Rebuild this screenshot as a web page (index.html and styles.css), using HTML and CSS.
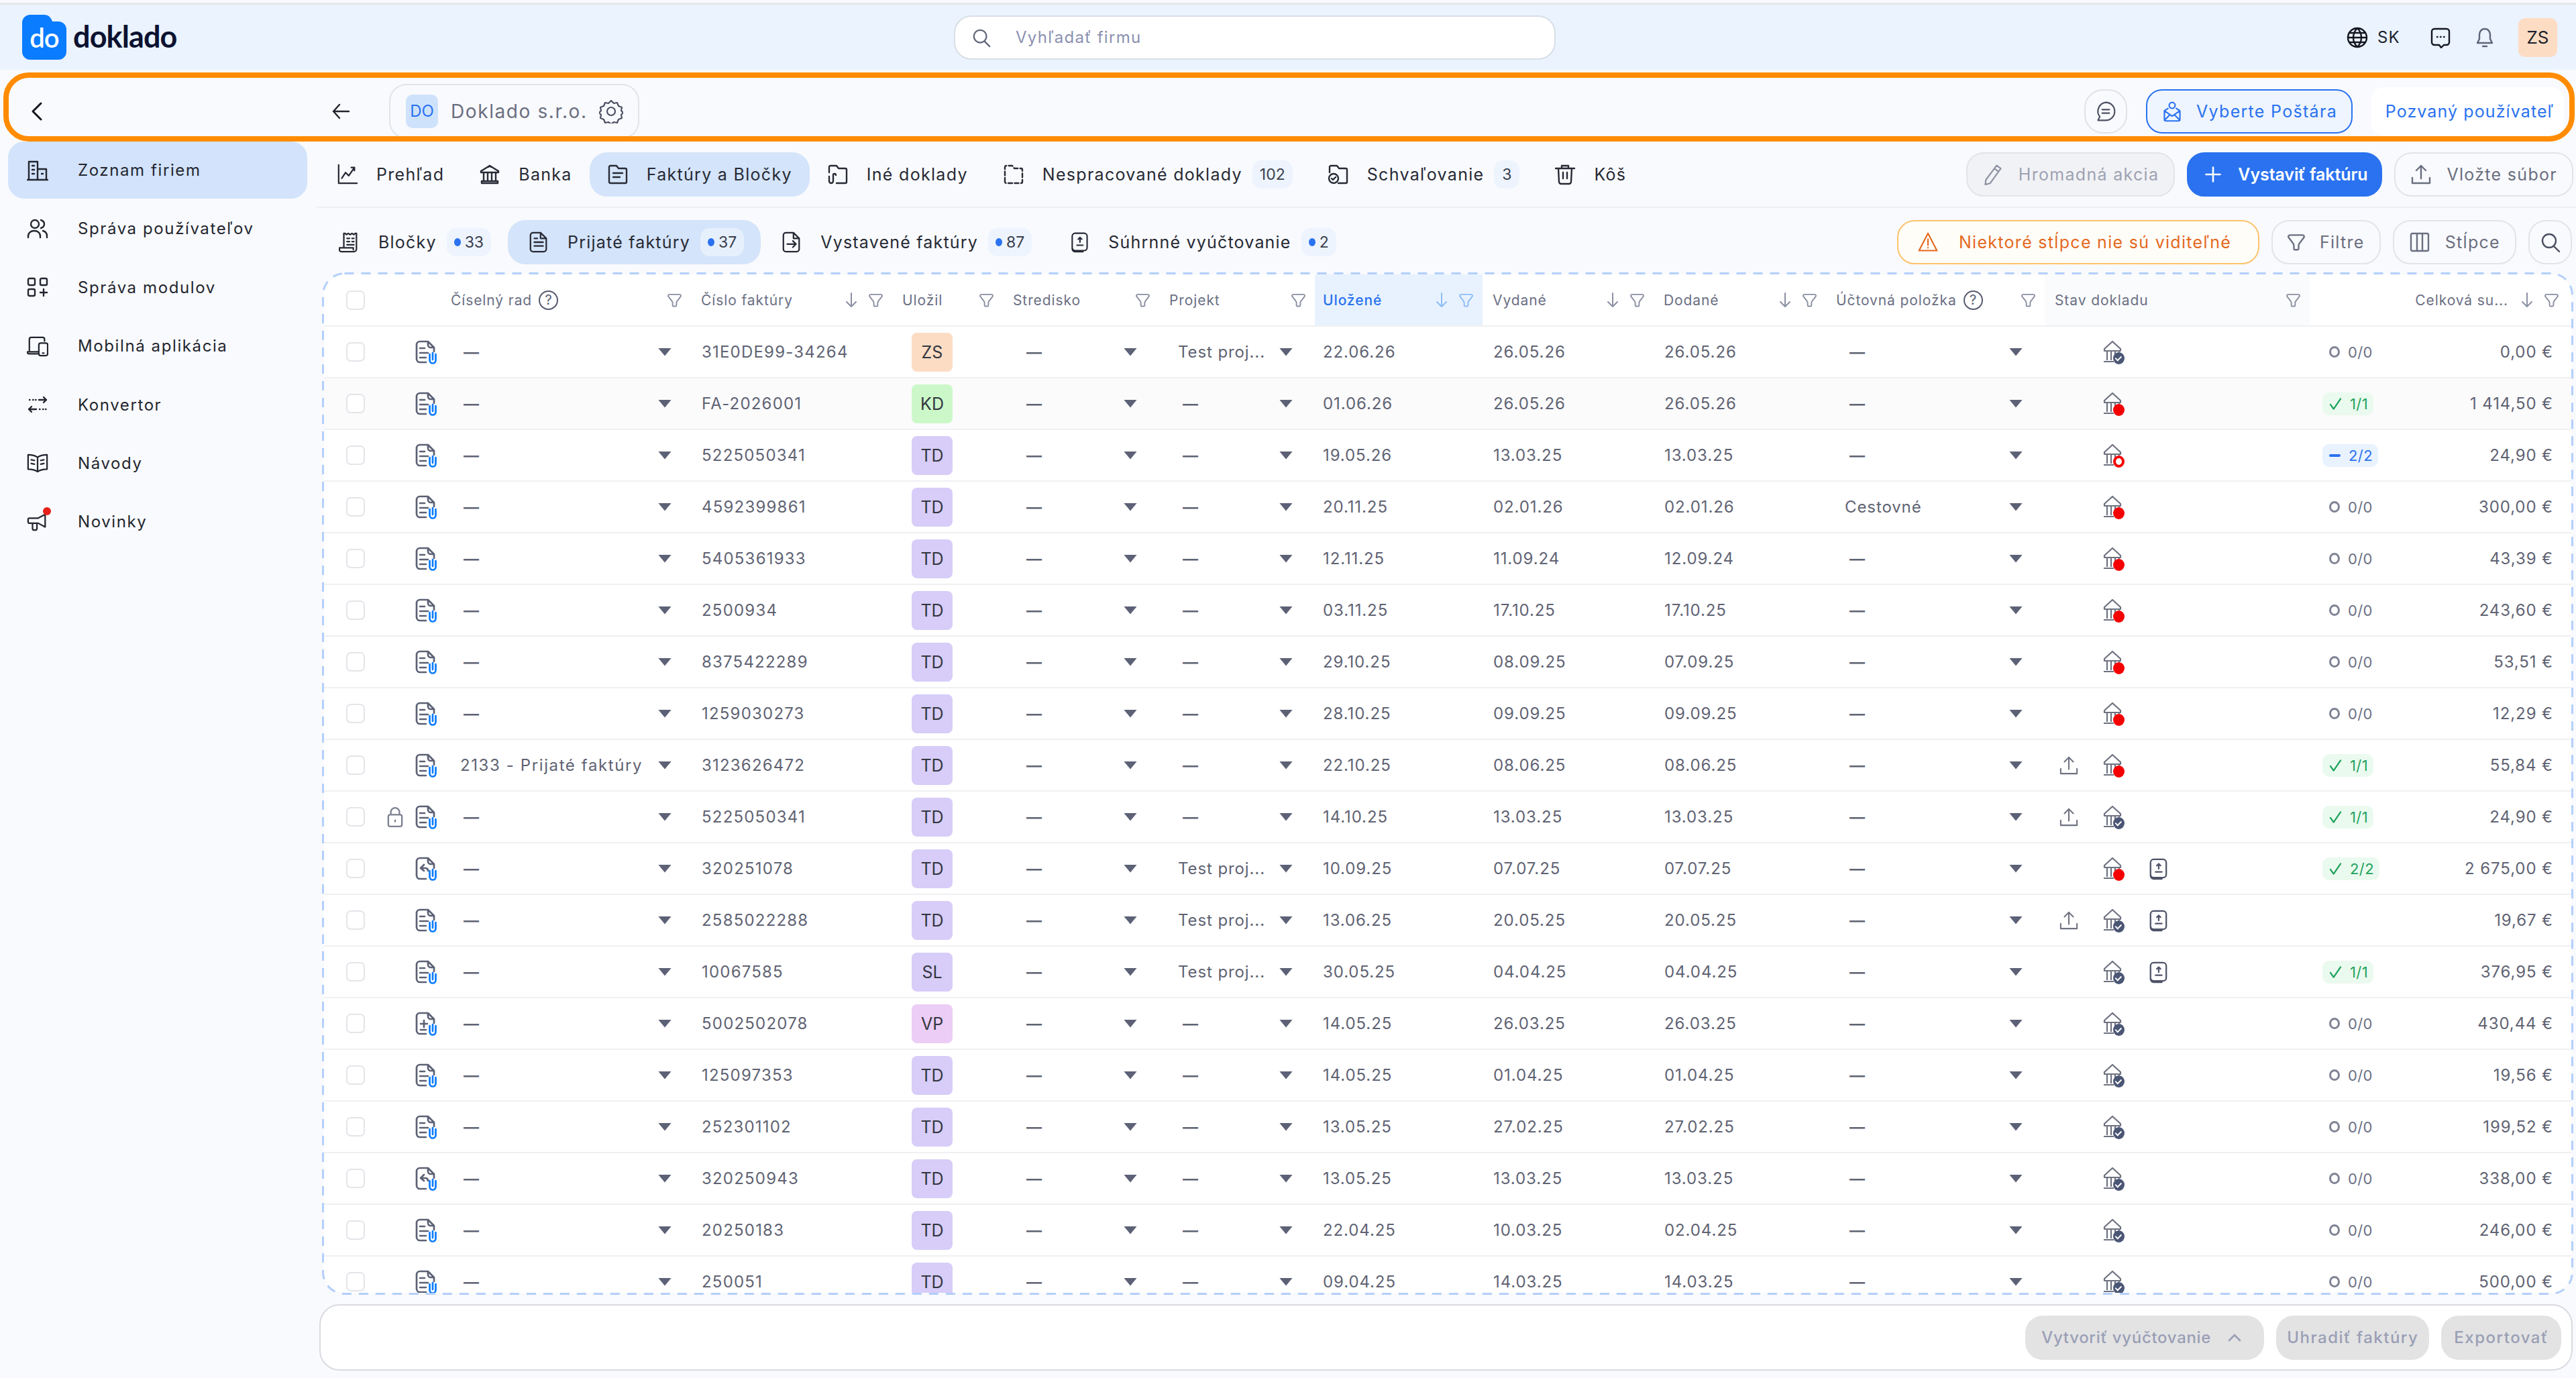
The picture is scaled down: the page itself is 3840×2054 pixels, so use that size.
FILE: index.html
```html
<!DOCTYPE html>
<html lang="sk">
<head>
<meta charset="utf-8">
<title>Doklado</title>
<link rel="stylesheet" href="styles.css">
</head>
<body>
<svg class="defs" aria-hidden="true">
<symbol id="filter" viewBox="0 0 22 22"><path d="M3 2h16a2 2 0 0 1 1.6 3.1L15 12.5c-.6.8-1 1.8-1 3V19a1.5 1.5 0 0 1-1.5 1.5h-3A1.5 1.5 0 0 1 8 19v-3.5c0-1.2-.4-2.2-1-3L1.4 5.1A2 2 0 0 1 3 2z"/></symbol>
<symbol id="adown" viewBox="0 0 20 24"><path d="M10 2v20M3 15l7 7 7-7"/></symbol>
<symbol id="doc" viewBox="0 0 33 36"><g stroke="#5c6175"><path d="M17 33H8a5 5 0 0 1-5-5V7a5 5 0 0 1 5-5h12l9 9v6M20 2v5a4 4 0 0 0 4 4h5M8 12h7M8 19h12M8 26h9"/></g><path stroke="#0a7cff" d="M22.5 21v9a4.5 4.5 0 0 0 9 0v-9M27 19v10"/></symbol>
<symbol id="docback" viewBox="0 0 33 36"><g stroke="#5c6175"><path d="M17 33H8a5 5 0 0 1-5-5V7a5 5 0 0 1 5-5h12l9 9v6M20 2v5a4 4 0 0 0 4 4h5M14 12l-5 5 5 4M9 17h8a4 4 0 0 1 3 4"/></g><path stroke="#0a7cff" d="M22.5 21v9a4.5 4.5 0 0 0 9 0v-9M27 19v10"/></symbol>
<symbol id="docplus" viewBox="0 0 33 36"><g stroke="#5c6175"><path d="M17 33H8a5 5 0 0 1-5-5V7a5 5 0 0 1 5-5h12l9 9v6M20 2v5a4 4 0 0 0 4 4h5M9 18h10M14 13v10M9 27h8"/></g><path stroke="#0a7cff" d="M22.5 21v9a4.5 4.5 0 0 0 9 0v-9M27 19v10"/></symbol>
<symbol id="bank" viewBox="0 0 33 35"><path d="M3 13 15 2l12 11v3H3zM7 16v14M13 16v14M19 16v6M25 16v2M2 32h15"/></symbol>
<symbol id="bankdark" viewBox="0 0 32 32"><path d="M3 11 16 3l13 8v2H3zM7 13v13M13 13v13M19 13v13M25 13v13M4 26h24v3H4z"/><path d="M14 5l2-2 2 2"/></symbol>
<symbol id="upl" viewBox="0 0 30 32"><path d="M15 22V3M8 10l7-7 7 7M2 21v8h26v-8"/></symbol>
<symbol id="stack" viewBox="0 0 32 36"><path d="M9 3h15a5 5 0 0 1 5 5v19a5 5 0 0 1-5 5H9a5 5 0 0 1-5-5V8a5 5 0 0 1 5-5zM4 26v3a5 5 0 0 0 5 5h13M12 23h10M17 18V10M14 13l3-3 3 3"/></symbol>
<symbol id="lock" viewBox="0 0 26 34"><path d="M6 13V9a7 7 0 0 1 14 0v4M5 13h16a3 3 0 0 1 3 3v13a3 3 0 0 1-3 3H5a3 3 0 0 1-3-3V16a3 3 0 0 1 3-3zM13 21v4"/></symbol>
<symbol id="search" viewBox="0 0 32 32"><path d="M14 4a10 10 0 1 1 0 20 10 10 0 0 1 0-20zM21 22l8 8"/></symbol>
<symbol id="globe" viewBox="0 0 32 32"><path d="M16 2a14 14 0 1 1 0 28 14 14 0 0 1 0-28zM2 16h28M4 9h24M4 23h24M16 2c-8 8-8 20 0 28M16 2c8 8 8 20 0 28"/></symbol>
<symbol id="msg" viewBox="0 0 32 32"><path d="M7 3h18a4 4 0 0 1 4 4v16a4 4 0 0 1-4 4h-4l-4 4-3-4H7a4 4 0 0 1-4-4V7a4 4 0 0 1 4-4zM11 15h.5M16 15h.5M21 15h.5"/></symbol>
<symbol id="bell" viewBox="0 0 32 32"><path d="M16 3c-5 0-8 4-8 9v6l-3 6h22l-3-6v-6c0-5-3-9-8-9zM13 29h6"/></symbol>
<symbol id="gear" viewBox="0 0 36 36"><path d="M18 2l4 4 5-1 2 5 5 2-1 5 3 3-3 3 1 5-5 2-2 5-5-1-4 3-4-3-5 1-2-5-5-2 1-5-3-3 3-3-1-5 5-2 2-5 5 1zM18 12a6 6 0 1 1 0 12 6 6 0 0 1 0-12z"/></symbol>
<symbol id="bubbles" viewBox="0 0 36 36"><path d="M18 3a15 15 0 0 1 0 30H5l3-6a15 15 0 0 1 10-24zM12 15h12M12 21h12"/></symbol>
<symbol id="mailman" viewBox="0 0 32 36"><path d="M3 17v14a3 3 0 0 0 3 3h20a3 3 0 0 0 3-3V17l-6-4M9 13l-6 4 13 9 13-9M3 33l9-9M29 33l-9-9M16 3a5 5 0 1 1 0 10 5 5 0 0 1 0-10z"/></symbol>
<symbol id="building" viewBox="0 0 32 32"><path d="M3 30V3h13v27M16 14h13v16M1 30h30M8 9h3M8 15h3M8 21h3M22 21h2"/></symbol>
<symbol id="users" viewBox="0 0 32 32"><path d="M12 3a6 6 0 1 1 0 12 6 6 0 0 1 0-12zM2 29v-2c0-5 4-8 9-8s9 3 9 8v2M21 3c3 1 5 3 5 6s-2 5-5 6M24 19c4 1 6 4 6 8v2"/></symbol>
<symbol id="mods" viewBox="0 0 32 32"><path d="M4 3h6a2 2 0 0 1 2 2v6a2 2 0 0 1-2 2H4a2 2 0 0 1-2-2V5a2 2 0 0 1 2-2zM22 3h6a2 2 0 0 1 2 2v6a2 2 0 0 1-2 2h-6a2 2 0 0 1-2-2V5a2 2 0 0 1 2-2zM4 19h6a2 2 0 0 1 2 2v6a2 2 0 0 1-2 2H4a2 2 0 0 1-2-2v-6a2 2 0 0 1 2-2zM25 19v10M20 24h10"/></symbol>
<symbol id="mobile" viewBox="0 0 34 32"><path d="M4 23V5a3 3 0 0 1 3-3h18a3 3 0 0 1 3 3v3M1 25h18v3H3a2 2 0 0 1-2-2zM22 11h8a3 3 0 0 1 3 3v14a3 3 0 0 1-3 3h-8a3 3 0 0 1-3-3V14a3 3 0 0 1 3-3zM25 27h2"/></symbol>
<symbol id="conv" viewBox="0 0 32 32"><path d="M18 9h11M25 5l4 4-4 4M3 23h11M7 19l-4 4 4 4M4 9h.5M9 9h.5M13 9h.5M19 23h.5M24 23h.5M28 23h.5"/></symbol>
<symbol id="book" viewBox="0 0 34 32"><path d="M17 7C13 4 7 3 2 3v23c5 0 11 1 15 4 4-3 10-4 15-4V3c-5 0-11 1-15 4zM17 7v23M7 11l5 1M7 17l5 1M27 11l-5 1M27 17l-5 1"/></symbol>
<symbol id="mega" viewBox="0 0 34 32"><path d="M4 10h14l11-6v20l-11-6H4a2 2 0 0 1-2-2v-4a2 2 0 0 1 2-2zM9 18v8a3 3 0 0 0 3 3h1a3 3 0 0 0 3-3v-8"/></symbol>
<symbol id="chart" viewBox="0 0 32 34"><path d="M2 2v29h29M7 23l6-9 5 5 9-13M22 6h5v5"/></symbol>
<symbol id="fdoc" viewBox="0 0 32 32"><path d="M3 5a2 2 0 0 1 2-2h9l3 4h10a2 2 0 0 1 2 2v18a2 2 0 0 1-2 2H5a2 2 0 0 1-2-2zM9 14h14M9 20h10"/></symbol>
<symbol id="fclip" viewBox="0 0 32 32"><path d="M3 13V5a2 2 0 0 1 2-2h9l3 4h10a2 2 0 0 1 2 2v18a2 2 0 0 1-2 2H14M3 19v7a3 3 0 0 0 6 0v-9a2 2 0 0 1 4 0"/></symbol>
<symbol id="fdash" viewBox="0 0 32 32"><path stroke-dasharray="6 3.500" d="M3 27V5a2 2 0 0 1 2-2h9l3 4h10a2 2 0 0 1 2 2v18a2 2 0 0 1-2 2H5a2 2 0 0 1-2-2z"/></symbol>
<symbol id="fcheck" viewBox="0 0 32 32"><path d="M3 13V5a2 2 0 0 1 2-2h9l3 4h10a2 2 0 0 1 2 2v18a2 2 0 0 1-2 2H16M9 15a7 7 0 1 1 0 14 7 7 0 0 1 0-14zM6 22l2 2 4-4"/></symbol>
<symbol id="trash" viewBox="0 0 32 32"><path d="M2 7h28M11 7V3h10v4M6 7l1 20a3 3 0 0 0 3 3h12a3 3 0 0 0 3-3l1-20M13 13v9M19 13v9"/></symbol>
<symbol id="receipt" viewBox="0 0 32 34"><path d="M7 26V3h2l2 2 3-2 3 2 3-2 3 2 2-2h2v25a4 4 0 0 1-4 4H3a3 3 0 0 1-3-3v-3h22v3M12 11h4M20 11h3M12 16h4M20 16h3M12 21h11"/></symbol>
<symbol id="dlines" viewBox="0 0 32 34"><path d="M7 2h12l9 9v17a4 4 0 0 1-4 4H7a4 4 0 0 1-4-4V6a4 4 0 0 1 4-4zM19 2v9h9M9 17h14M9 23h14M9 11h5"/></symbol>
<symbol id="darrow" viewBox="0 0 32 34"><path d="M7 2h12l9 9v17a4 4 0 0 1-4 4H7a4 4 0 0 1-4-4V6a4 4 0 0 1 4-4zM19 2v9h9M9 20h14M18 15l5 5-5 5"/></symbol>
<symbol id="pencil" viewBox="0 0 32 36"><path d="M22 3l7 5L11 33l-8 2 1-8zM18 8l7 5"/></symbol>
<symbol id="plus" viewBox="0 0 32 32"><path d="M16 3v26M3 16h26"/></symbol>
<symbol id="warn" viewBox="0 0 36 36"><path d="M18 3 33 32H3zM18 13v10M18 27v.500"/></symbol>
<symbol id="cols" viewBox="0 0 32 32"><path d="M5 3h22a2 2 0 0 1 2 2v22a2 2 0 0 1-2 2H5a2 2 0 0 1-2-2V5a2 2 0 0 1 2-2zM12 3v26M20 3v26"/></symbol>
<symbol id="check" viewBox="0 0 20 20"><path d="M2 11l5 7L18 2"/></symbol>
<symbol id="up" viewBox="0 0 20 12"><path d="M2 10l8-8 8 8"/></symbol>
<symbol id="back" viewBox="0 0 28 28"><path d="M26 14H3M12 4 3 14l9 10"/></symbol>
<symbol id="chev" viewBox="0 0 18 30"><path d="M15 3 3 15l12 12"/></symbol>
</svg>

<header class="topbar">
  <div class="logo"><div class="logo-mark"><svg viewBox="0 0 66 67"><path d="M12 0h21c6 0 10 4 12 10h9a12 12 0 0 1 12 12v33a12 12 0 0 1-12 12H12A12 12 0 0 1 0 55V12A12 12 0 0 1 12 0z"/></svg><span>do</span></div><span class="logo-word">doklado</span></div>
  <div class="searchbox"><svg class="ic ic-s"><use href="#search"/></svg><span>Vyhľadať firmu</span></div>
  <div class="top-right">
    <svg class="ic dark"><use href="#globe"/></svg><span class="lang">SK</span>
    <svg class="ic dark msg"><use href="#msg"/></svg>
    <svg class="ic bell"><use href="#bell"/></svg>
    <span class="user">ZS</span>
  </div>
</header>

<div class="crumb">
  <div class="crumb-left"><svg class="ic chev"><use href="#chev"/></svg></div>
  <svg class="ic back"><use href="#back"/></svg>
  <div class="company"><span class="co-av">DO</span><span class="co-name">Doklado s.r.o.</span><svg class="ic gear"><use href="#gear"/></svg></div>
  <div class="crumb-right">
    <span class="round-btn"><svg class="ic"><use href="#bubbles"/></svg></span>
    <span class="mail-btn"><svg class="ic"><use href="#mailman"/></svg>Vyberte Poštára</span>
    <span class="invited">Pozvaný používateľ</span>
  </div>
  <div class="frame"></div>
</div>

<div class="layout">
  <nav class="side">
    <a class="nav on"><svg class="ic"><use href="#building"/></svg>Zoznam firiem</a>
    <a class="nav"><svg class="ic"><use href="#users"/></svg>Správa používateľov</a>
    <a class="nav"><svg class="ic"><use href="#mods"/></svg>Správa modulov</a>
    <a class="nav"><svg class="ic"><use href="#mobile"/></svg>Mobilná aplikácia</a>
    <a class="nav"><svg class="ic"><use href="#conv"/></svg>Konvertor</a>
    <a class="nav"><svg class="ic"><use href="#book"/></svg>Návody</a>
    <a class="nav"><span class="mega"><svg class="ic"><use href="#mega"/></svg><i class="red-dot"></i></span>Novinky</a>
  </nav>

  <main class="main">
    <div class="tabs">
      <a class="tab"><svg class="ic"><use href="#chart"/></svg>Prehľad</a>
      <a class="tab"><svg class="ic"><use href="#bankdark"/></svg>Banka</a>
      <a class="tab on"><svg class="ic"><use href="#fdoc"/></svg>Faktúry a Bločky</a>
      <a class="tab"><svg class="ic"><use href="#fclip"/></svg>Iné doklady</a>
      <a class="tab"><svg class="ic"><use href="#fdash"/></svg>Nespracované doklady<span class="count">102</span></a>
      <a class="tab"><svg class="ic"><use href="#fcheck"/></svg>Schvaľovanie<span class="count">3</span></a>
      <a class="tab"><svg class="ic"><use href="#trash"/></svg>Kôš</a>
      <div class="actions">
        <span class="btn off"><svg class="ic"><use href="#pencil"/></svg>Hromadná akcia</span>
        <span class="btn primary"><svg class="ic"><use href="#plus"/></svg>Vystaviť faktúru</span>
        <span class="btn"><svg class="ic"><use href="#upl"/></svg>Vložte súbor</span>
      </div>
    </div>

    <div class="tabs sub">
      <a class="tab"><svg class="ic"><use href="#receipt"/></svg>Bločky<span class="count dot">33</span></a>
      <a class="tab on"><svg class="ic"><use href="#dlines"/></svg>Prijaté faktúry<span class="count dot">37</span></a>
      <a class="tab"><svg class="ic"><use href="#darrow"/></svg>Vystavené faktúry<span class="count dot">87</span></a>
      <a class="tab"><svg class="ic"><use href="#stack"/></svg>Súhrnné vyúčtovanie<span class="count dot">2</span></a>
      <div class="actions">
        <span class="btn warnbtn"><svg class="ic"><use href="#warn"/></svg>Niektoré stĺpce nie sú viditeľné</span>
        <span class="btn"><svg class="ic fun"><use href="#filter"/></svg>Filtre</span>
        <span class="btn"><svg class="ic"><use href="#cols"/></svg>Stĺpce</span>
        <span class="btn sq"><svg class="ic"><use href="#search"/></svg></span>
      </div>
    </div>

    <section class="table-wrap">
    <svg class="dashes" aria-hidden="true"><rect/></svg>
    <div class="table">
      <div class="row head">
        <div class="h"><i class="box"></i></div>
        <div class="h"></div>
        <div class="h"></div>
        <div class="h flush">Číselný rad<span class="help">?</span><svg class="fil"><use href="#filter"/></svg></div>
        <div class="h">Číslo faktúry<svg class="arr"><use href="#adown"/></svg><svg class="fil"><use href="#filter"/></svg></div>
        <div class="h">Uložil<svg class="fil"><use href="#filter"/></svg></div>
        <div class="h">Stredisko<svg class="fil"><use href="#filter"/></svg></div>
        <div class="h">Projekt<svg class="fil"><use href="#filter"/></svg></div>
        <div class="h sorted">Uložené<svg class="arr"><use href="#adown"/></svg><svg class="fil"><use href="#filter"/></svg></div>
        <div class="h">Vydané<svg class="arr"><use href="#adown"/></svg><svg class="fil"><use href="#filter"/></svg></div>
        <div class="h">Dodané<svg class="arr"><use href="#adown"/></svg><svg class="fil"><use href="#filter"/></svg></div>
        <div class="h">Účtovná položka<span class="help">?</span><svg class="fil"><use href="#filter"/></svg></div>
        <div class="h tint">Stav dokladu<svg class="fil"><use href="#filter"/></svg></div>
        <div class="h end">Celková su...<svg class="arr"><use href="#adown"/></svg><svg class="fil"><use href="#filter"/></svg></div>
      </div>

      <div class="row"><div class="c"><i class="box"></i></div><div class="c"></div><div class="c"><svg class="dic"><use href="#doc"/></svg></div><div class="c sel s1"><span class="dash">—</span><i class="caret"></i></div><div class="c num">31E0DE99-34264</div><div class="c"><span class="av zs">ZS</span></div><div class="c sel"><span class="dash">—</span><i class="caret"></i></div><div class="c sel"><span class="val">Test proj...</span><i class="caret"></i></div><div class="c date">22.06.26</div><div class="c date">26.05.26</div><div class="c date">26.05.26</div><div class="c sel"><span class="dash">—</span><i class="caret"></i></div><div class="c icons"><span class="slot"></span><span class="slot"><svg class="bk"><use href="#bank"/></svg><i class="pin ok"></i></span></div><div class="c sum"><span class="st"><i class="ring"></i>0/0</span><span class="amt">0,00 €</span></div></div>

      <div class="row alt"><div class="c"><i class="box"></i></div><div class="c"></div><div class="c"><svg class="dic"><use href="#doc"/></svg></div><div class="c sel s1"><span class="dash">—</span><i class="caret"></i></div><div class="c num">FA-2026001</div><div class="c"><span class="av kd">KD</span></div><div class="c sel"><span class="dash">—</span><i class="caret"></i></div><div class="c sel"><span class="dash">—</span><i class="caret"></i></div><div class="c date">01.06.26</div><div class="c date">26.05.26</div><div class="c date">26.05.26</div><div class="c sel"><span class="dash">—</span><i class="caret"></i></div><div class="c icons"><span class="slot"></span><span class="slot"><svg class="bk"><use href="#bank"/></svg><i class="pin red"></i></span></div><div class="c sum"><span class="st green"><svg class="tick"><use href="#check"/></svg>1/1</span><span class="amt">1 414,50 €</span></div></div>

      <div class="row"><div class="c"><i class="box"></i></div><div class="c"></div><div class="c"><svg class="dic"><use href="#doc"/></svg></div><div class="c sel s1"><span class="dash">—</span><i class="caret"></i></div><div class="c num">5225050341</div><div class="c"><span class="av td">TD</span></div><div class="c sel"><span class="dash">—</span><i class="caret"></i></div><div class="c sel"><span class="dash">—</span><i class="caret"></i></div><div class="c date">19.05.26</div><div class="c date">13.03.25</div><div class="c date">13.03.25</div><div class="c sel"><span class="dash">—</span><i class="caret"></i></div><div class="c icons"><span class="slot"></span><span class="slot"><svg class="bk"><use href="#bank"/></svg><i class="pin hollow"></i></span></div><div class="c sum"><span class="st blue"><i class="mini"></i>2/2</span><span class="amt">24,90 €</span></div></div>

      <div class="row"><div class="c"><i class="box"></i></div><div class="c"></div><div class="c"><svg class="dic"><use href="#doc"/></svg></div><div class="c sel s1"><span class="dash">—</span><i class="caret"></i></div><div class="c num">4592399861</div><div class="c"><span class="av td">TD</span></div><div class="c sel"><span class="dash">—</span><i class="caret"></i></div><div class="c sel"><span class="dash">—</span><i class="caret"></i></div><div class="c date">20.11.25</div><div class="c date">02.01.26</div><div class="c date">02.01.26</div><div class="c sel"><span class="val">Cestovné</span><i class="caret"></i></div><div class="c icons"><span class="slot"></span><span class="slot"><svg class="bk"><use href="#bank"/></svg><i class="pin red"></i></span></div><div class="c sum"><span class="st"><i class="ring"></i>0/0</span><span class="amt">300,00 €</span></div></div>

      <div class="row"><div class="c"><i class="box"></i></div><div class="c"></div><div class="c"><svg class="dic"><use href="#doc"/></svg></div><div class="c sel s1"><span class="dash">—</span><i class="caret"></i></div><div class="c num">5405361933</div><div class="c"><span class="av td">TD</span></div><div class="c sel"><span class="dash">—</span><i class="caret"></i></div><div class="c sel"><span class="dash">—</span><i class="caret"></i></div><div class="c date">12.11.25</div><div class="c date">11.09.24</div><div class="c date">12.09.24</div><div class="c sel"><span class="dash">—</span><i class="caret"></i></div><div class="c icons"><span class="slot"></span><span class="slot"><svg class="bk"><use href="#bank"/></svg><i class="pin red"></i></span></div><div class="c sum"><span class="st"><i class="ring"></i>0/0</span><span class="amt">43,39 €</span></div></div>

      <div class="row"><div class="c"><i class="box"></i></div><div class="c"></div><div class="c"><svg class="dic"><use href="#doc"/></svg></div><div class="c sel s1"><span class="dash">—</span><i class="caret"></i></div><div class="c num">2500934</div><div class="c"><span class="av td">TD</span></div><div class="c sel"><span class="dash">—</span><i class="caret"></i></div><div class="c sel"><span class="dash">—</span><i class="caret"></i></div><div class="c date">03.11.25</div><div class="c date">17.10.25</div><div class="c date">17.10.25</div><div class="c sel"><span class="dash">—</span><i class="caret"></i></div><div class="c icons"><span class="slot"></span><span class="slot"><svg class="bk"><use href="#bank"/></svg><i class="pin red"></i></span></div><div class="c sum"><span class="st"><i class="ring"></i>0/0</span><span class="amt">243,60 €</span></div></div>

      <div class="row"><div class="c"><i class="box"></i></div><div class="c"></div><div class="c"><svg class="dic"><use href="#doc"/></svg></div><div class="c sel s1"><span class="dash">—</span><i class="caret"></i></div><div class="c num">8375422289</div><div class="c"><span class="av td">TD</span></div><div class="c sel"><span class="dash">—</span><i class="caret"></i></div><div class="c sel"><span class="dash">—</span><i class="caret"></i></div><div class="c date">29.10.25</div><div class="c date">08.09.25</div><div class="c date">07.09.25</div><div class="c sel"><span class="dash">—</span><i class="caret"></i></div><div class="c icons"><span class="slot"></span><span class="slot"><svg class="bk"><use href="#bank"/></svg><i class="pin red"></i></span></div><div class="c sum"><span class="st"><i class="ring"></i>0/0</span><span class="amt">53,51 €</span></div></div>

      <div class="row"><div class="c"><i class="box"></i></div><div class="c"></div><div class="c"><svg class="dic"><use href="#doc"/></svg></div><div class="c sel s1"><span class="dash">—</span><i class="caret"></i></div><div class="c num">1259030273</div><div class="c"><span class="av td">TD</span></div><div class="c sel"><span class="dash">—</span><i class="caret"></i></div><div class="c sel"><span class="dash">—</span><i class="caret"></i></div><div class="c date">28.10.25</div><div class="c date">09.09.25</div><div class="c date">09.09.25</div><div class="c sel"><span class="dash">—</span><i class="caret"></i></div><div class="c icons"><span class="slot"></span><span class="slot"><svg class="bk"><use href="#bank"/></svg><i class="pin red"></i></span></div><div class="c sum"><span class="st"><i class="ring"></i>0/0</span><span class="amt">12,29 €</span></div></div>

      <div class="row"><div class="c"><i class="box"></i></div><div class="c"></div><div class="c"><svg class="dic"><use href="#doc"/></svg></div><div class="c sel s1 long"><span class="val">2133 - Prijaté faktúry</span><i class="caret"></i></div><div class="c num">3123626472</div><div class="c"><span class="av td">TD</span></div><div class="c sel"><span class="dash">—</span><i class="caret"></i></div><div class="c sel"><span class="dash">—</span><i class="caret"></i></div><div class="c date">22.10.25</div><div class="c date">08.06.25</div><div class="c date">08.06.25</div><div class="c sel"><span class="dash">—</span><i class="caret"></i></div><div class="c icons"><span class="slot"><svg class="upl"><use href="#upl"/></svg></span><span class="slot"><svg class="bk"><use href="#bank"/></svg><i class="pin red"></i></span></div><div class="c sum"><span class="st green"><svg class="tick"><use href="#check"/></svg>1/1</span><span class="amt">55,84 €</span></div></div>

      <div class="row"><div class="c"><i class="box"></i></div><div class="c"><svg class="lk"><use href="#lock"/></svg></div><div class="c"><svg class="dic"><use href="#doc"/></svg></div><div class="c sel s1"><span class="dash">—</span><i class="caret"></i></div><div class="c num">5225050341</div><div class="c"><span class="av td">TD</span></div><div class="c sel"><span class="dash">—</span><i class="caret"></i></div><div class="c sel"><span class="dash">—</span><i class="caret"></i></div><div class="c date">14.10.25</div><div class="c date">13.03.25</div><div class="c date">13.03.25</div><div class="c sel"><span class="dash">—</span><i class="caret"></i></div><div class="c icons"><span class="slot"><svg class="upl"><use href="#upl"/></svg></span><span class="slot"><svg class="bk"><use href="#bank"/></svg><i class="pin ok"></i></span></div><div class="c sum"><span class="st green"><svg class="tick"><use href="#check"/></svg>1/1</span><span class="amt">24,90 €</span></div></div>

      <div class="row"><div class="c"><i class="box"></i></div><div class="c"></div><div class="c"><svg class="dic"><use href="#docback"/></svg></div><div class="c sel s1"><span class="dash">—</span><i class="caret"></i></div><div class="c num">320251078</div><div class="c"><span class="av td">TD</span></div><div class="c sel"><span class="dash">—</span><i class="caret"></i></div><div class="c sel"><span class="val">Test proj...</span><i class="caret"></i></div><div class="c date">10.09.25</div><div class="c date">07.07.25</div><div class="c date">07.07.25</div><div class="c sel"><span class="dash">—</span><i class="caret"></i></div><div class="c icons"><span class="slot"></span><span class="slot"><svg class="bk"><use href="#bank"/></svg><i class="pin red"></i></span><span class="slot"><svg class="stk"><use href="#stack"/></svg></span></div><div class="c sum"><span class="st green"><svg class="tick"><use href="#check"/></svg>2/2</span><span class="amt">2 675,00 €</span></div></div>

      <div class="row"><div class="c"><i class="box"></i></div><div class="c"></div><div class="c"><svg class="dic"><use href="#doc"/></svg></div><div class="c sel s1"><span class="dash">—</span><i class="caret"></i></div><div class="c num">2585022288</div><div class="c"><span class="av td">TD</span></div><div class="c sel"><span class="dash">—</span><i class="caret"></i></div><div class="c sel"><span class="val">Test proj...</span><i class="caret"></i></div><div class="c date">13.06.25</div><div class="c date">20.05.25</div><div class="c date">20.05.25</div><div class="c sel"><span class="dash">—</span><i class="caret"></i></div><div class="c icons"><span class="slot"><svg class="upl"><use href="#upl"/></svg></span><span class="slot"><svg class="bk"><use href="#bank"/></svg><i class="pin ok"></i></span><span class="slot"><svg class="stk"><use href="#stack"/></svg></span></div><div class="c sum"><span></span><span class="amt">19,67 €</span></div></div>

      <div class="row"><div class="c"><i class="box"></i></div><div class="c"></div><div class="c"><svg class="dic"><use href="#doc"/></svg></div><div class="c sel s1"><span class="dash">—</span><i class="caret"></i></div><div class="c num">10067585</div><div class="c"><span class="av sl">SL</span></div><div class="c sel"><span class="dash">—</span><i class="caret"></i></div><div class="c sel"><span class="val">Test proj...</span><i class="caret"></i></div><div class="c date">30.05.25</div><div class="c date">04.04.25</div><div class="c date">04.04.25</div><div class="c sel"><span class="dash">—</span><i class="caret"></i></div><div class="c icons"><span class="slot"></span><span class="slot"><svg class="bk"><use href="#bank"/></svg><i class="pin ok"></i></span><span class="slot"><svg class="stk"><use href="#stack"/></svg></span></div><div class="c sum"><span class="st green"><svg class="tick"><use href="#check"/></svg>1/1</span><span class="amt">376,95 €</span></div></div>

      <div class="row"><div class="c"><i class="box"></i></div><div class="c"></div><div class="c"><svg class="dic"><use href="#docplus"/></svg></div><div class="c sel s1"><span class="dash">—</span><i class="caret"></i></div><div class="c num">5002502078</div><div class="c"><span class="av vp">VP</span></div><div class="c sel"><span class="dash">—</span><i class="caret"></i></div><div class="c sel"><span class="dash">—</span><i class="caret"></i></div><div class="c date">14.05.25</div><div class="c date">26.03.25</div><div class="c date">26.03.25</div><div class="c sel"><span class="dash">—</span><i class="caret"></i></div><div class="c icons"><span class="slot"></span><span class="slot"><svg class="bk"><use href="#bank"/></svg><i class="pin ok"></i></span></div><div class="c sum"><span class="st"><i class="ring"></i>0/0</span><span class="amt">430,44 €</span></div></div>

      <div class="row"><div class="c"><i class="box"></i></div><div class="c"></div><div class="c"><svg class="dic"><use href="#doc"/></svg></div><div class="c sel s1"><span class="dash">—</span><i class="caret"></i></div><div class="c num">125097353</div><div class="c"><span class="av td">TD</span></div><div class="c sel"><span class="dash">—</span><i class="caret"></i></div><div class="c sel"><span class="dash">—</span><i class="caret"></i></div><div class="c date">14.05.25</div><div class="c date">01.04.25</div><div class="c date">01.04.25</div><div class="c sel"><span class="dash">—</span><i class="caret"></i></div><div class="c icons"><span class="slot"></span><span class="slot"><svg class="bk"><use href="#bank"/></svg><i class="pin ok"></i></span></div><div class="c sum"><span class="st"><i class="ring"></i>0/0</span><span class="amt">19,56 €</span></div></div>

      <div class="row"><div class="c"><i class="box"></i></div><div class="c"></div><div class="c"><svg class="dic"><use href="#doc"/></svg></div><div class="c sel s1"><span class="dash">—</span><i class="caret"></i></div><div class="c num">252301102</div><div class="c"><span class="av td">TD</span></div><div class="c sel"><span class="dash">—</span><i class="caret"></i></div><div class="c sel"><span class="dash">—</span><i class="caret"></i></div><div class="c date">13.05.25</div><div class="c date">27.02.25</div><div class="c date">27.02.25</div><div class="c sel"><span class="dash">—</span><i class="caret"></i></div><div class="c icons"><span class="slot"></span><span class="slot"><svg class="bk"><use href="#bank"/></svg><i class="pin ok"></i></span></div><div class="c sum"><span class="st"><i class="ring"></i>0/0</span><span class="amt">199,52 €</span></div></div>

      <div class="row"><div class="c"><i class="box"></i></div><div class="c"></div><div class="c"><svg class="dic"><use href="#docback"/></svg></div><div class="c sel s1"><span class="dash">—</span><i class="caret"></i></div><div class="c num">320250943</div><div class="c"><span class="av td">TD</span></div><div class="c sel"><span class="dash">—</span><i class="caret"></i></div><div class="c sel"><span class="dash">—</span><i class="caret"></i></div><div class="c date">13.05.25</div><div class="c date">13.03.25</div><div class="c date">13.03.25</div><div class="c sel"><span class="dash">—</span><i class="caret"></i></div><div class="c icons"><span class="slot"></span><span class="slot"><svg class="bk"><use href="#bank"/></svg><i class="pin ok"></i></span></div><div class="c sum"><span class="st"><i class="ring"></i>0/0</span><span class="amt">338,00 €</span></div></div>

      <div class="row"><div class="c"><i class="box"></i></div><div class="c"></div><div class="c"><svg class="dic"><use href="#doc"/></svg></div><div class="c sel s1"><span class="dash">—</span><i class="caret"></i></div><div class="c num">20250183</div><div class="c"><span class="av td">TD</span></div><div class="c sel"><span class="dash">—</span><i class="caret"></i></div><div class="c sel"><span class="dash">—</span><i class="caret"></i></div><div class="c date">22.04.25</div><div class="c date">10.03.25</div><div class="c date">02.04.25</div><div class="c sel"><span class="dash">—</span><i class="caret"></i></div><div class="c icons"><span class="slot"></span><span class="slot"><svg class="bk"><use href="#bank"/></svg><i class="pin ok"></i></span></div><div class="c sum"><span class="st"><i class="ring"></i>0/0</span><span class="amt">246,00 €</span></div></div>

      <div class="row"><div class="c"><i class="box"></i></div><div class="c"></div><div class="c"><svg class="dic"><use href="#doc"/></svg></div><div class="c sel s1"><span class="dash">—</span><i class="caret"></i></div><div class="c num">250051</div><div class="c"><span class="av td">TD</span></div><div class="c sel"><span class="dash">—</span><i class="caret"></i></div><div class="c sel"><span class="dash">—</span><i class="caret"></i></div><div class="c date">09.04.25</div><div class="c date">14.03.25</div><div class="c date">14.03.25</div><div class="c sel"><span class="dash">—</span><i class="caret"></i></div><div class="c icons"><span class="slot"></span><span class="slot"><svg class="bk"><use href="#bank"/></svg><i class="pin ok"></i></span></div><div class="c sum"><span class="st"><i class="ring"></i>0/0</span><span class="amt">500,00 €</span></div></div>
    </div>
    </section>

    <footer class="bottom">
      <span class="gbtn first">Vytvoriť vyúčtovanie<svg class="ic up"><use href="#up"/></svg></span>
      <span class="gbtn">Uhradiť faktúry</span>
      <span class="gbtn last">Exportovať</span>
    </footer>
  </main>
</div>
</body>
</html>
```

FILE: styles.css
```css
* { box-sizing: border-box; }
html, body { margin: 0; height: 100%; }
body {
  width: 3840px; height: 2054px; overflow: hidden;
  background: #f9fafd; color: #1c1f2b;
  font-family: "Inter", "Liberation Sans", sans-serif;
  font-size: 24px; letter-spacing: 1.3px;
}
a, i { font-style: normal; }
.defs { position: absolute; width: 0; height: 0; }

.ic { width: 32px; height: 32px; flex: none; fill: none; stroke: currentColor; stroke-width: 2.4; stroke-linecap: round; stroke-linejoin: round; }

/* top bar */
.topbar { margin-top: 4px; height: 100px; border-top: 3px solid #e6e8ea; background: #eaf3fe; display: flex; align-items: center; padding: 0 28px 0 33px; position: relative; }
.logo { display: flex; align-items: center; gap: 10px; width: 1389px; }
.logo-mark { position: relative; width: 66px; height: 67px; display: flex; align-items: center; justify-content: center; }
.logo-mark svg { position: absolute; inset: 0; width: 100%; height: 100%; fill: #0a7cff; }
.logo-mark span { position: relative; color: #fff; font-size: 40px; font-weight: 600; letter-spacing: -1px; font-family: "Lato", sans-serif; }
.logo-word { font-size: 45px; font-weight: 700; color: #0c1230; letter-spacing: -0.9px; font-family: "Lato", sans-serif; margin-top: -3px; }
.searchbox { width: 897px; height: 66px; background: #fff; border: 2px solid #d8dee6; border-radius: 26px; display: flex; align-items: center; padding-left: 24px; gap: 36px; color: #8b90b0; font-size: 24px; }
.ic-s { color: #5f6478; width: 30px; height: 30px; }
.top-right { margin-left: auto; display: flex; align-items: center; }
.dark { color: #14161f; }
.lang { margin-left: 14px; font-size: 24px; color: #1c1f2b; }
.msg { margin-left: 44px; }
.bell { margin-left: 34px; color: #5f6478; }
.user { margin-left: 34px; width: 58px; height: 58px; border-radius: 10px; background: #fddcc4; display: flex; align-items: center; justify-content: center; font-size: 26px; letter-spacing: 0; }

/* breadcrumb strip */
.crumb { position: relative; height: 107px; display: flex; align-items: center; padding-top: 16px; padding-right: 18px; }
.crumb-left { width: 494px; padding-left: 46px; display: flex; }
.chev { width: 18px; height: 30px; color: #14161f; stroke-width: 3; }
.back { width: 28px; height: 28px; color: #22252f; }
.company { margin-left: 58px; width: 373px; height: 82px; border: 2px solid #e1e4e8; border-radius: 26px; display: flex; align-items: center; padding-left: 23px; gap: 19px; }
.co-av { width: 48px; height: 50px; border-radius: 10px; background: #cfe2fb; color: #2a72ef; display: flex; align-items: center; justify-content: center; font-size: 24px; letter-spacing: 0; }
.co-name { color: #6a6f80; font-size: 28px; letter-spacing: 1.6px; white-space: nowrap; }
.gear { width: 36px; height: 36px; color: #4c5062; stroke-width: 2.2; margin-left: -2px; }
.crumb-right { margin-left: auto; display: flex; align-items: center; }
.round-btn { width: 64px; height: 66px; border: 2px solid #dfe2e6; border-radius: 28px; display: flex; align-items: center; justify-content: center; color: #4c5062; }
.mail-btn { margin-left: 28px; width: 308px; height: 66px; border: 2px solid #2a72ef; border-radius: 24px; background: #eef5fe; color: #2a72ef; display: flex; align-items: center; justify-content: center; gap: 20px; font-size: 25px; }
.invited { margin-left: 28px; width: 287px; height: 72px; padding-left: 6px; background: #fff; border-radius: 18px; color: #2a72ef; display: flex; align-items: center; justify-content: center; font-size: 25px; letter-spacing: 1.1px; white-space: nowrap; }
.frame { position: absolute; left: 5px; right: 2px; top: 4px; bottom: 0; border: 8px solid #ff8c00; border-radius: 38px; pointer-events: none; }

/* layout */
.layout { display: flex; }
.side { width: 472px; flex: none; padding-left: 12px; padding-right: 14px; display: flex; flex-direction: column; gap: 2.4px; }
.nav { height: 85px; display: flex; align-items: center; gap: 44px; padding-left: 28px; border-radius: 24px; font-size: 24px; letter-spacing: 1.6px; color: #23262f; }
.nav.on { background: #d2e3fb; }
.mega { position: relative; display: flex; }
.red-dot { position: absolute; right: -4px; top: -6px; width: 12px; height: 12px; border-radius: 50%; background: #e8201a; }

.main { flex: 1; min-width: 0; }
.tabs { height: 99px; padding: 0 4px 0 4px; border-bottom: 2px solid #eef0f3; display: flex; align-items: center; }
.tabs.sub { height: 96px; padding: 6px 6px 0 3px; border: 0; }
.tab { height: 66px; padding: 0 26px; border-radius: 26px; display: flex; align-items: center; gap: 27px; font-size: 25px; letter-spacing: 1.3px; white-space: nowrap; color: #272a35; }
.tab.on { background: #d4e4fa; }
.sub .tab { padding: 0 25px 0 30px; letter-spacing: 1.2px; }
.count { margin-left: -12px; min-width: 38px; height: 42px; padding: 0 11px; border-radius: 14px; background: #edf4fe; display: flex; align-items: center; justify-content: center; gap: 6px; font-size: 23px; letter-spacing: 0; color: #3a3e4c; }
.count.dot::before { content: ""; width: 10px; height: 12px; border-radius: 50%; background: #2a72ef; }
.tab.on .count { background: #e6f0fd; }
.actions { margin-left: auto; display: flex; gap: 18px; }
.btn { height: 66px; padding: 0 22px; border: 2px solid #e1e4e8; border-radius: 26px; display: flex; align-items: center; gap: 22px; font-size: 25px; color: #6a6f80; white-space: nowrap; }
.btn.off { background: #f1f2f5; color: #9ea2b3; }
.btn.off .ic { color: #8d91a2; }
.btn.primary { background: #2a72ef; border-color: #2a72ef; color: #fff; font-weight: 600; letter-spacing: -0.1px; padding: 0 20px 0 24px; gap: 24px; }
.btn.primary .ic { width: 26px; height: 26px; stroke-width: 3.2; }
.btn.warnbtn { background: #fffdf8; border-color: #fbc36d; color: #e4691f; gap: 30px; width: 540px; padding-left: 28px; }
.btn.sq { width: 65px; padding: 0; justify-content: center; color: #4c5062; }
.fun { width: 26px; height: 26px; stroke-width: 2; }

/* table */
.table-wrap { position: relative; margin: 0 4px 0 8px; height: 1524px; padding: 3px; }
.dashes { position: absolute; inset: 0; width: 100%; height: 100%; pointer-events: none; z-index: 1; }
.dashes rect { x: 1.5px; y: 1.5px; width: calc(100% - 3px); height: calc(100% - 3px); rx: 32px; fill: none; stroke: #b3cffb; stroke-width: 3; stroke-dasharray: 14 11; }
.table { height: 100%; border-radius: 30px; background: #fff; overflow: hidden; }
.row {
  display: grid; height: 77px; border-bottom: 2px solid #eff0f3;
  grid-template-columns: 89px 40px 60px 358px 300px 165px 233px 232px 250px 255px 257px 326px 395px 1fr;
  font-size: 24px; letter-spacing: 0.9px; color: #5f6373;
}
.row.alt { background: #fbfbfc; }
.row.head { height: 78px; font-size: 21px; letter-spacing: 0.9px; color: #6b7084; }
.h { display: flex; align-items: center; padding: 0 14px 0 15px; white-space: nowrap; }
.h:first-child { padding-left: 33px; }
.h.flush { padding-left: 0; }
.h.sorted { background: #e8f2fe; color: #2a72ef; padding-left: 12px; font-weight: 500; }
.h.tint { background: #fafbfc; }
.h.end { justify-content: flex-end; padding-right: 19px; }
.h.end .arr { margin-left: 18px; }
.fil { width: 21px; height: 21px; flex: none; margin-left: auto; fill: none; stroke: #8b90a2; stroke-width: 2; stroke-linejoin: round; }
.h.end .fil { margin-left: 16px; }
.arr { width: 20px; height: 24px; flex: none; margin-left: auto; fill: none; stroke: #8b90a2; stroke-width: 2; stroke-linecap: round; stroke-linejoin: round; }
.arr + .fil { margin-left: 16px; }
.sorted .fil, .sorted .arr { stroke: #8dbcf8; }
.help { margin-left: 10px; width: 29px; height: 29px; border: 2px solid #565b70; border-radius: 50%; display: flex; align-items: center; justify-content: center; font-size: 20px; letter-spacing: 0; color: #565b70; flex: none; }

.c { display: flex; align-items: center; white-space: nowrap; }
.c:first-child { padding-left: 33px; }
.box { display: block; width: 28px; height: 29px; border: 2px solid #e3e5e9; border-radius: 7px; background: #fff; }
.lk { width: 24px; height: 32px; margin-left: 5px; fill: none; stroke: #7c8090; stroke-width: 2.500; stroke-linejoin: round; }
.dic { width: 33px; height: 36px; margin-left: 6px; fill: none; stroke-width: 2.700; stroke-linecap: round; stroke-linejoin: round; }
.sel { justify-content: space-between; padding: 0 33px 0 35px; }
.s1 { padding: 0 29px 0 19px; }
.long { padding-left: 14px; letter-spacing: 1.6px; }
.val { margin-left: -7px; }
.s1 .val { margin-left: 0; }
.dash { font-size: 23px; letter-spacing: 0; color: #5f6373; font-weight: 600; }
.caret { width: 20px; height: 12px; background: #5d6176; clip-path: polygon(0 0, 100% 0, 50% 100%); flex: none; }
.num { padding-left: 16px; letter-spacing: 1.2px; }
.date { padding-left: 12px; }
.date + .date { padding-left: 16px; }
.av { margin-left: 29px; width: 61px; height: 58px; border-radius: 8px; display: flex; align-items: center; justify-content: center; font-size: 25px; letter-spacing: 0; color: #33363f; }
.zs { background: #fddcc4; }
.kd { background: #ccf8c9; }
.td, .sl { background: #d7cdf8; }
.vp { background: #eccdf5; }
.icons { padding-left: 22px; }
.slot { position: relative; width: 64px; height: 36px; display: flex; align-items: center; }
.upl { width: 28px; height: 32px; fill: none; stroke: #6e7280; stroke-width: 2.200; stroke-linecap: round; stroke-linejoin: round; }
.bk { width: 33px; height: 35px; fill: none; stroke: #6e7280; stroke-width: 2.200; stroke-linejoin: round; }
.stk { width: 30px; height: 34px; margin-left: 4px; fill: none; stroke: #4e5368; stroke-width: 2.400; stroke-linecap: round; stroke-linejoin: round; }
.pin { position: absolute; left: 16px; top: 18px; width: 17px; height: 18px; border-radius: 50%; }
.pin.red { background: #f40000; }
.pin.hollow { background: #fff; border: 4px solid #f40000; }
.pin.ok { background: #4b5675; display: flex; align-items: center; justify-content: center; }
.pin.ok::after { content: ""; width: 7px; height: 4px; border-left: 2px solid #fff; border-bottom: 2px solid #fff; transform: rotate(-45deg) translate(0, -1px); }
.sum { justify-content: space-between; padding: 0 27px 0 19px; }
.st { height: 34px; padding: 0 0 0 10px; display: flex; align-items: center; gap: 12px; border-radius: 10px; font-size: 22px; letter-spacing: 0.4px; color: #6b7084; }
.st.green { background: #ebfaef; color: #1ea35c; padding-right: 8px; }
.st.blue { background: #e9f2ff; color: #2a72ef; padding-right: 8px; }
.ring { width: 16px; height: 17px; border: 3px solid #7f8394; border-radius: 50%; }
.tick { width: 19px; height: 20px; fill: none; stroke: #1ea35c; stroke-width: 2.400; stroke-linecap: round; stroke-linejoin: round; }
.mini { width: 17px; height: 4px; background: #2a72ef; border-radius: 2px; }

/* bottom bar */
.bottom { margin: 14px 5px 0 4px; height: 99px; border: 2px solid #d9dbe0; border-radius: 30px; background: #fff; display: flex; align-items: center; justify-content: flex-end; gap: 18px; padding-right: 15px; }
.gbtn { height: 66px; padding: 0 16px; border-radius: 26px; background: #e3e3e4; color: #9a9fb5; font-size: 24px; font-weight: 500; letter-spacing: 1.5px; display: flex; align-items: center; gap: 25px; white-space: nowrap; }
.gbtn.first { padding: 0 34px 0 24px; letter-spacing: 0.7px; }
.gbtn.last { padding: 0 19px; }
.up { width: 20px; height: 12px; stroke-width: 2.600; }
```
